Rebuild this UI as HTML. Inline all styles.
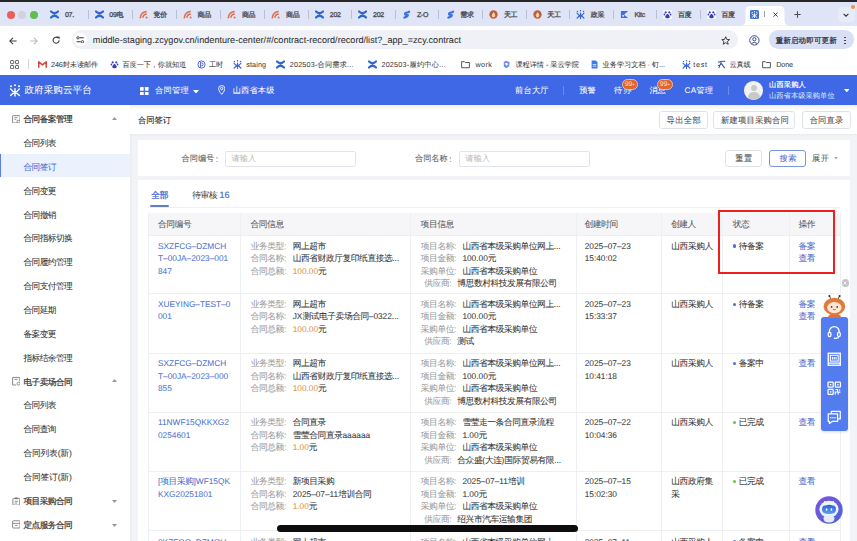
<!DOCTYPE html><html><head><meta charset="utf-8"><style>
*{margin:0;padding:0;box-sizing:border-box}
html,body{width:857px;height:541px;overflow:hidden;background:#f2f3f6;font-family:"Liberation Sans",sans-serif;color:#333;-webkit-text-stroke-width:0.04px;text-rendering:geometricPrecision}
.a{position:absolute;white-space:nowrap}
svg{display:block}
.ti{width:9px;height:9px}
.sep{position:absolute;top:10px;width:1px;height:9px;background:#b9c0d4}
.t{position:absolute;white-space:nowrap}
.lb{color:#9a9a9a}
.vl{position:absolute;width:1px;background:#edeff3}
.hl{position:absolute;height:1px;background:#edeff3}
.btn{position:absolute;border:1px solid #dfe2e8;border-radius:3px;background:#fff}
</style></head><body>
<div class="a" style="left:0;top:0;width:857px;height:25.5px;background:#dfe4f6"></div>
<div class="a" style="left:0;top:0;width:857px;height:1.6px;background:#262626"></div>
<div class="a" style="left:6.6px;top:10.5px;width:8px;height:8px;border-radius:50%;background:#ec5f58"></div>
<div class="a" style="left:18.4px;top:10.5px;width:8px;height:8px;border-radius:50%;background:#d0d3da"></div>
<div class="a" style="left:30.2px;top:10.5px;width:8px;height:8px;border-radius:50%;background:#60bd4e"></div>
<div class="a" style="left:50.3px;top:10px;width:9px;height:9px"><svg class="ti" viewBox="0 0 10 10"><path d="M1.1 1.7Q5 5.4 8.9 1.7M1.1 8.3Q5 4.6 8.9 8.3" stroke="#3065d4" stroke-width="2.5" stroke-linecap="round" fill="none"/></svg></div>
<div id="t0" class="t" style="left:65.0px;top:10.3px;font-size:7px;line-height:12px;color:#4a4d55;-webkit-text-stroke-width:0.3px;letter-spacing:-0.3px">07. </div>
<div class="a" style="left:94.6px;top:10px;width:9px;height:9px"><svg class="ti" viewBox="0 0 10 10"><path d="M1.1 1.7Q5 5.4 8.9 1.7M1.1 8.3Q5 4.6 8.9 8.3" stroke="#3065d4" stroke-width="2.5" stroke-linecap="round" fill="none"/></svg></div>
<div id="t1" class="t" style="left:109.3px;top:10.3px;font-size:7px;line-height:12px;color:#4a4d55;-webkit-text-stroke-width:0.3px;letter-spacing:-0.3px">09电</div>
<div class="a" style="left:138.9px;top:10px;width:9px;height:9px"><svg class="ti" viewBox="0 0 10 10"><path d="M1.6 8.6A7 7 0 0 1 8.6 1.6M4.4 8.6A4.2 4.2 0 0 1 8.6 4.4" stroke="#de6a4c" stroke-width="1.7" fill="none"/><circle cx="8.4" cy="8.4" r="1.1" fill="#de6a4c"/><circle cx="1.5" cy="8.6" r=".9" fill="#de6a4c"/></svg></div>
<div id="t2" class="t" style="left:153.6px;top:10.3px;font-size:7px;line-height:12px;color:#4a4d55;-webkit-text-stroke-width:0.3px;letter-spacing:-0.3px">竞价</div>
<div class="a" style="left:182.9px;top:10px;width:9px;height:9px"><svg class="ti" viewBox="0 0 10 10"><path d="M1.6 8.6A7 7 0 0 1 8.6 1.6M4.4 8.6A4.2 4.2 0 0 1 8.6 4.4" stroke="#de6a4c" stroke-width="1.7" fill="none"/><circle cx="8.4" cy="8.4" r="1.1" fill="#de6a4c"/><circle cx="1.5" cy="8.6" r=".9" fill="#de6a4c"/></svg></div>
<div id="t3" class="t" style="left:197.6px;top:10.3px;font-size:7px;line-height:12px;color:#4a4d55;-webkit-text-stroke-width:0.3px;letter-spacing:-0.3px">商品</div>
<div class="a" style="left:227.2px;top:10px;width:9px;height:9px"><svg class="ti" viewBox="0 0 10 10"><path d="M1.6 8.6A7 7 0 0 1 8.6 1.6M4.4 8.6A4.2 4.2 0 0 1 8.6 4.4" stroke="#de6a4c" stroke-width="1.7" fill="none"/><circle cx="8.4" cy="8.4" r="1.1" fill="#de6a4c"/><circle cx="1.5" cy="8.6" r=".9" fill="#de6a4c"/></svg></div>
<div id="t4" class="t" style="left:241.89999999999998px;top:10.3px;font-size:7px;line-height:12px;color:#4a4d55;-webkit-text-stroke-width:0.3px;letter-spacing:-0.3px">商品</div>
<div class="a" style="left:271.4px;top:10px;width:9px;height:9px"><svg class="ti" viewBox="0 0 10 10"><path d="M1.6 8.6A7 7 0 0 1 8.6 1.6M4.4 8.6A4.2 4.2 0 0 1 8.6 4.4" stroke="#de6a4c" stroke-width="1.7" fill="none"/><circle cx="8.4" cy="8.4" r="1.1" fill="#de6a4c"/><circle cx="1.5" cy="8.6" r=".9" fill="#de6a4c"/></svg></div>
<div id="t5" class="t" style="left:286.09999999999997px;top:10.3px;font-size:7px;line-height:12px;color:#4a4d55;-webkit-text-stroke-width:0.3px;letter-spacing:-0.3px">商品</div>
<div class="a" style="left:315.1px;top:10px;width:9px;height:9px"><svg class="ti" viewBox="0 0 10 10"><path d="M1.1 1.7Q5 5.4 8.9 1.7M1.1 8.3Q5 4.6 8.9 8.3" stroke="#3065d4" stroke-width="2.5" stroke-linecap="round" fill="none"/></svg></div>
<div id="t6" class="t" style="left:329.8px;top:10.3px;font-size:7px;line-height:12px;color:#4a4d55;-webkit-text-stroke-width:0.3px;letter-spacing:-0.3px">202</div>
<div class="a" style="left:358.4px;top:10px;width:9px;height:9px"><svg class="ti" viewBox="0 0 10 10"><path d="M1.1 1.7Q5 5.4 8.9 1.7M1.1 8.3Q5 4.6 8.9 8.3" stroke="#3065d4" stroke-width="2.5" stroke-linecap="round" fill="none"/></svg></div>
<div id="t7" class="t" style="left:373.09999999999997px;top:10.3px;font-size:7px;line-height:12px;color:#4a4d55;-webkit-text-stroke-width:0.3px;letter-spacing:-0.3px">202</div>
<div class="a" style="left:402.2px;top:10px;width:9px;height:9px"><svg class="ti" viewBox="0 0 10 10"><path d="M7.5 2.5C5 2.5 2.5 3.8 3.5 5 4.5 6 7 4.8 6.5 6.3 6 7.5 3.5 8 2.5 8.5" stroke="#3470e0" stroke-width="2.2" stroke-linecap="round" fill="none"/><circle cx="8" cy="1.6" r="1" fill="#3470e0"/></svg></div>
<div id="t8" class="t" style="left:416.9px;top:10.3px;font-size:7px;line-height:12px;color:#4a4d55;-webkit-text-stroke-width:0.3px;letter-spacing:-0.3px">Z-O</div>
<div class="a" style="left:445.5px;top:10px;width:9px;height:9px"><svg class="ti" viewBox="0 0 10 10"><path d="M7.5 2.5C5 2.5 2.5 3.8 3.5 5 4.5 6 7 4.8 6.5 6.3 6 7.5 3.5 8 2.5 8.5" stroke="#3470e0" stroke-width="2.2" stroke-linecap="round" fill="none"/><circle cx="8" cy="1.6" r="1" fill="#3470e0"/></svg></div>
<div id="t9" class="t" style="left:460.2px;top:10.3px;font-size:7px;line-height:12px;color:#4a4d55;-webkit-text-stroke-width:0.3px;letter-spacing:-0.3px">需求</div>
<div class="a" style="left:489.2px;top:10px;width:9px;height:9px"><svg class="ti" viewBox="0 0 10 10"><circle cx="5" cy="5" r="4.6" fill="#b9603f"/><path d="M5 2.2C6.8 4 7 5.3 7 6.2A2 2 0 0 1 3 6.2C3 5 4 4.5 5 2.2Z" fill="#f6d2a5"/></svg></div>
<div id="t10" class="t" style="left:503.9px;top:10.3px;font-size:7px;line-height:12px;color:#4a4d55;-webkit-text-stroke-width:0.3px;letter-spacing:-0.3px">天工</div>
<div class="a" style="left:532.5px;top:10px;width:9px;height:9px"><svg class="ti" viewBox="0 0 10 10"><circle cx="5" cy="5" r="4.6" fill="#b9603f"/><path d="M5 2.2C6.8 4 7 5.3 7 6.2A2 2 0 0 1 3 6.2C3 5 4 4.5 5 2.2Z" fill="#f6d2a5"/></svg></div>
<div id="t11" class="t" style="left:547.2px;top:10.3px;font-size:7px;line-height:12px;color:#4a4d55;-webkit-text-stroke-width:0.3px;letter-spacing:-0.3px">天工</div>
<div class="a" style="left:576.0px;top:10px;width:9px;height:9px"><svg class="ti" viewBox="0 0 10 10"><path d="M5 3.5V9.5M1.2 3.6Q3 6.2 5 6.2Q7 6.2 8.8 3.6M1.2 9Q3 6.6 5 6.6Q7 6.6 8.8 9" stroke="#3a63d4" stroke-width="1.3" fill="none" stroke-linecap="round"/><circle cx="1.6" cy="1.6" r=".8" fill="#3a63d4"/><circle cx="5" cy="0.9" r=".8" fill="#3a63d4"/><circle cx="8.4" cy="1.6" r=".8" fill="#3a63d4"/></svg></div>
<div id="t12" class="t" style="left:590.7px;top:10.3px;font-size:7px;line-height:12px;color:#4a4d55;-webkit-text-stroke-width:0.3px;letter-spacing:-0.3px">政采</div>
<div class="a" style="left:619.8px;top:10px;width:9px;height:9px"><svg class="ti" viewBox="0 0 10 10"><path d="M1 1H9L4.5 5.2 9 9H1Z" fill="#3e6fe0"/><circle cx="3.5" cy="6.5" r="1" fill="#fff"/></svg></div>
<div id="t13" class="t" style="left:634.5px;top:10.3px;font-size:7px;line-height:12px;color:#4a4d55;-webkit-text-stroke-width:0.3px;letter-spacing:-0.3px">Kitc</div>
<div class="a" style="left:663.2px;top:10px;width:9px;height:9px"><svg class="ti" viewBox="0 0 10 10"><rect x="-0.5" y="-0.5" width="11" height="11" rx="2" fill="#fff" opacity=".7"/><ellipse cx="3" cy="2.6" rx="1" ry="1.3" fill="#3a3fb8"/><ellipse cx="7" cy="2.6" rx="1" ry="1.3" fill="#3a3fb8"/><ellipse cx="1.5" cy="5" rx=".9" ry="1.1" fill="#3a3fb8"/><ellipse cx="8.5" cy="5" rx=".9" ry="1.1" fill="#3a3fb8"/><path d="M5 4.3C3.6 5.6 2 6.8 2.6 8.3 3.2 9.5 6.8 9.5 7.4 8.3 8 6.8 6.4 5.6 5 4.3Z" fill="#3a3fb8"/></svg></div>
<div id="t14" class="t" style="left:677.9000000000001px;top:10.3px;font-size:7px;line-height:12px;color:#4a4d55;-webkit-text-stroke-width:0.3px;letter-spacing:-0.3px">百度</div>
<div class="a" style="left:706.7px;top:10px;width:9px;height:9px"><svg class="ti" viewBox="0 0 10 10"><rect x="-0.5" y="-0.5" width="11" height="11" rx="2" fill="#fff" opacity=".7"/><ellipse cx="3" cy="2.6" rx="1" ry="1.3" fill="#3a3fb8"/><ellipse cx="7" cy="2.6" rx="1" ry="1.3" fill="#3a3fb8"/><ellipse cx="1.5" cy="5" rx=".9" ry="1.1" fill="#3a3fb8"/><ellipse cx="8.5" cy="5" rx=".9" ry="1.1" fill="#3a3fb8"/><path d="M5 4.3C3.6 5.6 2 6.8 2.6 8.3 3.2 9.5 6.8 9.5 7.4 8.3 8 6.8 6.4 5.6 5 4.3Z" fill="#3a3fb8"/></svg></div>
<div id="t15" class="t" style="left:721.4000000000001px;top:10.3px;font-size:7px;line-height:12px;color:#4a4d55;-webkit-text-stroke-width:0.3px;letter-spacing:-0.3px">百度</div>
<div class="sep" style="left:88.2px"></div>
<div class="sep" style="left:131.9px"></div>
<div class="sep" style="left:175.9px"></div>
<div class="sep" style="left:220.2px"></div>
<div class="sep" style="left:264.4px"></div>
<div class="sep" style="left:308.3px"></div>
<div class="sep" style="left:351.4px"></div>
<div class="sep" style="left:395.1px"></div>
<div class="sep" style="left:438.3px"></div>
<div class="sep" style="left:482.3px"></div>
<div class="sep" style="left:525.6px"></div>
<div class="sep" style="left:568.9px"></div>
<div class="sep" style="left:612.8px"></div>
<div class="sep" style="left:656.3px"></div>
<div class="sep" style="left:699.7px"></div>
<svg class="a" style="left:740px;top:6.2px" width="50" height="19.5" viewBox="0 0 50 19.5"><path d="M0 19.5Q5.5 19.5 5.5 14.5V5Q5.5 0 10.5 0H39.5Q44.5 0 44.5 5V14.5Q44.5 19.5 50 19.5Z" fill="#fff"/></svg>
<div class="a" style="left:750px;top:9.6px;width:9.4px;height:9.4px;border-radius:1.5px;background:#3d73d9"></div>
<svg class="a" style="left:751.2px;top:10.6px" width="7" height="7.4" viewBox="0 0 12 13"><path d="M6 4.6V12M1.6 4.9Q4 8.2 6 8.2Q8 8.2 10.4 4.9M1.6 11.5Q4 8.6 6 8.6Q8 8.6 10.4 11.5" stroke="#fff" stroke-width="1.6" fill="none" stroke-linecap="round"/><circle cx="2" cy="2.3" r="1.1" fill="#fff"/><circle cx="6" cy="1.2" r="1.1" fill="#fff"/><circle cx="10" cy="2.3" r="1.1" fill="#fff"/></svg>
<div class="a" style="left:764.3px;top:11px;width:1px;height:6px;background:#9aa0aa"></div>
<svg class="a" style="left:772.6px;top:12.2px" width="5.2" height="5.2" viewBox="0 0 10 10"><path d="M1 1 9 9M9 1 1 9" stroke="#333" stroke-width="1.8"/></svg>
<svg class="a" style="left:793.5px;top:10.8px" width="7" height="7" viewBox="0 0 10 10"><path d="M5 0.5V9.5M0.5 5H9.5" stroke="#4a4d55" stroke-width="1.5"/></svg>
<div class="a" style="left:837.5px;top:6.7px;width:17px;height:15.5px;border-radius:4px;background:#e8ecf8"></div>
<svg class="a" style="left:843px;top:12.8px" width="6" height="4" viewBox="0 0 10 6"><path d="M1 1 5 5 9 1" stroke="#333" stroke-width="1.8" fill="none"/></svg>
<div class="a" style="left:850.6px;top:4.6px;width:4.4px;height:4.4px;border-radius:50%;background:#e29a4d"></div>
<div class="a" style="left:0;top:25.5px;width:857px;height:49.5px;background:#fff"></div>
<svg class="a" style="left:8.5px;top:36.5px" width="8" height="8" viewBox="0 0 10 10"><path d="M9.5 5H1M5 1 1 5 5 9" stroke="#3c3c3c" stroke-width="1.3" fill="none"/></svg>
<svg class="a" style="left:29.5px;top:36.5px" width="8" height="8" viewBox="0 0 10 10"><path d="M0.5 5H9M5 1 9 5 5 9" stroke="#b9b9b9" stroke-width="1.3" fill="none"/></svg>
<svg class="a" style="left:51.5px;top:36.3px" width="8.4" height="8.4" viewBox="0 0 10 10"><path d="M8.5 5.2A3.6 3.6 0 1 1 7.3 2.3" stroke="#3c3c3c" stroke-width="1.3" fill="none"/><path d="M5.8 0.6 9.2 0.8 8.8 4.2Z" fill="#3c3c3c"/></svg>
<div class="a" style="left:71.5px;top:30.3px;width:666.5px;height:18.6px;border-radius:9.3px;background:#eff1f6"></div>
<div class="a" style="left:74.2px;top:33.3px;width:12.6px;height:12.6px;border-radius:50%;background:#fff"></div>
<svg class="a" style="left:76.3px;top:35.6px" width="8.4" height="7.6" viewBox="-0.3 -0.3 10.6 9.6"><path d="M4.3 2H9.5M0.5 7H5.7" stroke="#333" stroke-width="1.3"/><circle cx="2.2" cy="2" r="1.5" fill="none" stroke="#333" stroke-width="1.1"/><circle cx="7.8" cy="7" r="1.5" fill="none" stroke="#333" stroke-width="1.1"/></svg>
<div id="t16" class="t" style="left:92.8px;top:34px;font-size:9.1px;line-height:13px;color:#2d2d2d;letter-spacing:0.015px;">middle-staging.zcygov.cn/indenture-center/#/contract-record/record/list?_app_=zcy.contract</div>
<svg class="a" style="left:720.8px;top:35.8px" width="9.4" height="9.2" viewBox="0 0 10 10"><path d="M5 0.8 6.2 3.7 9.3 3.9 6.9 5.9 7.7 9 5 7.3 2.3 9 3.1 5.9 0.7 3.9 3.8 3.7Z" stroke="#333" stroke-width="1" fill="none" stroke-linejoin="round"/></svg>
<svg class="a" style="left:749.2px;top:35.2px" width="10.8" height="10.8" viewBox="0 0 12 12"><circle cx="6" cy="6" r="5.2" stroke="#3b4a86" stroke-width="1.1" fill="none"/><circle cx="6" cy="4.7" r="1.8" stroke="#3b4a86" stroke-width="1.1" fill="none"/><path d="M2.8 9.5Q6 6.6 9.2 9.5" stroke="#3b4a86" stroke-width="1.1" fill="none"/></svg>
<div class="a" style="left:768.6px;top:30.3px;width:85.4px;height:18.6px;border-radius:9.3px;background:#d9e0f6"></div>
<div id="t17" class="t" style="left:775.7px;top:34.3px;font-size:7.5px;line-height:13px;color:#25283a;letter-spacing:0.143px;-webkit-text-stroke-width:0.2px">重新启动即可更新</div>
<div class="a" style="left:844.3px;top:36.6px;width:1.6px;height:1.6px;border-radius:50%;background:#25283a"></div>
<div class="a" style="left:844.3px;top:39.6px;width:1.6px;height:1.6px;border-radius:50%;background:#25283a"></div>
<div class="a" style="left:844.3px;top:42.6px;width:1.6px;height:1.6px;border-radius:50%;background:#25283a"></div>
<svg class="a" style="left:10px;top:59.5px" width="9.2" height="9.2" viewBox="0 0 10 10"><rect x="0.6" y="0.6" width="3.4" height="3.4" rx=".6" stroke="#555" stroke-width="1" fill="none"/><rect x="6" y="0.6" width="3.4" height="3.4" rx=".6" stroke="#555" stroke-width="1" fill="none"/><rect x="0.6" y="6" width="3.4" height="3.4" rx=".6" stroke="#555" stroke-width="1" fill="none"/><rect x="6" y="6" width="3.4" height="3.4" rx=".6" stroke="#555" stroke-width="1" fill="none"/></svg>
<div class="a" style="left:28.2px;top:59px;width:1px;height:10px;background:#d5d5d5"></div>
<div class="a" style="left:37.6px;top:59.8px;width:9px;height:9px"><svg class="ti" viewBox="0 0 10 10"><path d="M0.8 8.5V2L5 5.5 9.2 2V8.5" stroke="#d8473b" stroke-width="1.8" fill="none" stroke-linejoin="round"/></svg></div>
<div id="t18" class="t" style="left:51px;top:58.2px;font-size:7.2px;line-height:13px;color:#3a3a3a;letter-spacing:-0.091px;">246封未读邮件</div>
<div class="a" style="left:109.8px;top:59.8px;width:9px;height:9px"><svg class="ti" viewBox="0 0 10 10"><rect x="-0.5" y="-0.5" width="11" height="11" rx="2" fill="#fff" opacity="0"/><ellipse cx="3" cy="2.6" rx="1" ry="1.3" fill="#3a3fb8"/><ellipse cx="7" cy="2.6" rx="1" ry="1.3" fill="#3a3fb8"/><ellipse cx="1.5" cy="5" rx=".9" ry="1.1" fill="#3a3fb8"/><ellipse cx="8.5" cy="5" rx=".9" ry="1.1" fill="#3a3fb8"/><path d="M5 4.3C3.6 5.6 2 6.8 2.6 8.3 3.2 9.5 6.8 9.5 7.4 8.3 8 6.8 6.4 5.6 5 4.3Z" fill="#3a3fb8"/></svg></div>
<div id="t19" class="t" style="left:122.5px;top:58.2px;font-size:7.2px;line-height:13px;color:#3a3a3a;letter-spacing:-0.123px;">百度一下，你就知道</div>
<div class="a" style="left:196.5px;top:59.8px;width:9px;height:9px"><svg class="ti" viewBox="0 0 10 10"><circle cx="5" cy="5" r="4" stroke="#3b5ac8" stroke-width="1" fill="none"/><path d="M3.8 2.5V8.5M3.8 3.2H5.2A1.6 1.6 0 0 1 5.2 6.4H3.8" stroke="#3b5ac8" stroke-width="1" fill="none"/></svg></div>
<div id="t20" class="t" style="left:208.9px;top:58.2px;font-size:7.2px;line-height:13px;color:#3a3a3a;letter-spacing:0.025px;">工时</div>
<div class="a" style="left:233px;top:59.8px;width:9px;height:9px"><svg class="ti" viewBox="0 0 10 10"><path d="M5 3.5V9.5M1.2 3.6Q3 6.2 5 6.2Q7 6.2 8.8 3.6M1.2 9Q3 6.6 5 6.6Q7 6.6 8.8 9" stroke="#3a63d4" stroke-width="1.3" fill="none" stroke-linecap="round"/><circle cx="1.6" cy="1.6" r=".8" fill="#3a63d4"/><circle cx="5" cy="0.9" r=".8" fill="#3a63d4"/><circle cx="8.4" cy="1.6" r=".8" fill="#3a63d4"/></svg></div>
<div id="t21" class="t" style="left:246.3px;top:58.2px;font-size:7.2px;line-height:13px;color:#3a3a3a;letter-spacing:0.102px;">staing</div>
<div class="a" style="left:275.6px;top:59.8px;width:9px;height:9px"><svg class="ti" viewBox="0 0 10 10"><path d="M1.1 1.7Q5 5.4 8.9 1.7M1.1 8.3Q5 4.6 8.9 8.3" stroke="#3065d4" stroke-width="2.5" stroke-linecap="round" fill="none"/></svg></div>
<div id="t22" class="t" style="left:289.8px;top:58.2px;font-size:7.2px;line-height:13px;color:#3a3a3a;letter-spacing:0.190px;">202503-合同需求...</div>
<div class="a" style="left:368px;top:59.8px;width:9px;height:9px"><svg class="ti" viewBox="0 0 10 10"><path d="M1.1 1.7Q5 5.4 8.9 1.7M1.1 8.3Q5 4.6 8.9 8.3" stroke="#3065d4" stroke-width="2.5" stroke-linecap="round" fill="none"/></svg></div>
<div id="t23" class="t" style="left:381.4px;top:58.2px;font-size:7.2px;line-height:13px;color:#3a3a3a;letter-spacing:0.244px;">202503-履约中心...</div>
<div class="a" style="left:460.8px;top:59.8px;width:9px;height:9px"><svg class="ti" viewBox="0 0 10 10"><path d="M0.7 1.8H3.8L4.8 2.8H9.3V8.6H0.7Z" stroke="#444" stroke-width="1" fill="none" stroke-linejoin="round"/></svg></div>
<div id="t24" class="t" style="left:475.5px;top:58.2px;font-size:7.2px;line-height:13px;color:#3a3a3a;letter-spacing:0.404px;">work</div>
<div class="a" style="left:502px;top:59.8px;width:9px;height:9px"><svg class="ti" viewBox="0 0 10 10"><path d="M2 2 5 0.8 8.5 2.5 8 7 5 9.2 2 7.5Z" fill="#6f90e6"/><path d="M3 4 5 3 7 4.5 5 6.5Z" fill="#fff"/></svg></div>
<div id="t25" class="t" style="left:515.4px;top:58.2px;font-size:7.2px;line-height:13px;color:#3a3a3a;letter-spacing:-0.039px;">课程详情 - 采云学院</div>
<div class="a" style="left:589.5px;top:59.8px;width:9px;height:9px"><svg class="ti" viewBox="0 0 10 10"><path d="M1.8 0.6H6.4L8.4 2.6V9.4H1.8Z" fill="#3d7bea"/><path d="M3 5H7M3 6.8H7" stroke="#fff" stroke-width=".8"/></svg></div>
<div id="t26" class="t" style="left:602.6px;top:58.2px;font-size:7.2px;line-height:13px;color:#3a3a3a;letter-spacing:-0.025px;">业务学习文档 · 钉...</div>
<div class="a" style="left:682px;top:59.8px;width:9px;height:9px"><svg class="ti" viewBox="0 0 10 10"><path d="M5 3.5V9.5M1.2 3.6Q3 6.2 5 6.2Q7 6.2 8.8 3.6M1.2 9Q3 6.6 5 6.6Q7 6.6 8.8 9" stroke="#3a63d4" stroke-width="1.3" fill="none" stroke-linecap="round"/><circle cx="1.6" cy="1.6" r=".8" fill="#3a63d4"/><circle cx="5" cy="0.9" r=".8" fill="#3a63d4"/><circle cx="8.4" cy="1.6" r=".8" fill="#3a63d4"/></svg></div>
<div id="t27" class="t" style="left:693.3px;top:58.2px;font-size:7.2px;line-height:13px;color:#3a3a3a;letter-spacing:0.702px;">test</div>
<div class="a" style="left:717px;top:59.8px;width:9px;height:9px"><svg class="ti" viewBox="0 0 10 10"><path d="M1 2.5Q5 1 9 1.5M5 1.5 2 9M5 4 8.5 9M5 4Q3 6 1 6.5" stroke="#3756b8" stroke-width="1.2" fill="none"/></svg></div>
<div id="t28" class="t" style="left:729.4px;top:58.2px;font-size:7.2px;line-height:13px;color:#3a3a3a;letter-spacing:-0.081px;">云真线</div>
<div class="a" style="left:761.6px;top:59.8px;width:9px;height:9px"><svg class="ti" viewBox="0 0 10 10"><path d="M0.7 1.8H3.8L4.8 2.8H9.3V8.6H0.7Z" stroke="#444" stroke-width="1" fill="none" stroke-linejoin="round"/></svg></div>
<div id="t29" class="t" style="left:776.3px;top:58.2px;font-size:7.2px;line-height:13px;color:#3a3a3a;letter-spacing:-0.129px;">Done</div>
<div class="a" style="left:0;top:74.8px;width:857px;height:30.5px;background:#3e68e5"></div>
<svg class="a" style="left:8.5px;top:84px" width="12" height="13" viewBox="0 0 12 13"><path d="M6 4.6V12M1.6 4.9Q4 8.2 6 8.2Q8 8.2 10.4 4.9M1.6 11.5Q4 8.6 6 8.6Q8 8.6 10.4 11.5" stroke="#fff" stroke-width="1.4" fill="none" stroke-linecap="round"/><circle cx="2" cy="2.3" r="1" fill="#fff"/><circle cx="6" cy="1.2" r="1" fill="#fff"/><circle cx="10" cy="2.3" r="1" fill="#fff"/></svg>
<div id="t30" class="t" style="left:24.5px;top:84.5px;font-size:9.5px;line-height:12px;color:#fff;letter-spacing:0.117px;">政府采购云平台</div>
<svg class="a" style="left:140px;top:86.5px" width="8.6" height="8.6" viewBox="0 0 10 10"><rect x="0" y="0" width="4.3" height="4.3" rx=".5" fill="#fff"/><rect x="5.7" y="0" width="4.3" height="4.3" rx=".5" fill="#fff"/><rect x="0" y="5.7" width="4.3" height="4.3" rx=".5" fill="#fff"/><rect x="5.7" y="5.7" width="4.3" height="4.3" rx=".5" fill="#fff"/></svg>
<div id="t31" class="t" style="left:155px;top:85px;font-size:8.2px;line-height:12px;color:#fff;letter-spacing:0.317px;">合同管理</div>
<svg class="a" style="left:193px;top:89.5px" width="6" height="3.6" viewBox="0 0 10 6"><path d="M0 0H10L5 6Z" fill="#fff"/></svg>
<svg class="a" style="left:217.5px;top:85.2px" width="7.4" height="10" viewBox="0 0 8 11"><path d="M4 10.3C1.5 7.3 0.6 5.6 0.6 4A3.4 3.4 0 0 1 7.4 4C7.4 5.6 6.5 7.3 4 10.3Z" stroke="#fff" stroke-width="1" fill="none"/><circle cx="4" cy="4" r="1.3" stroke="#fff" stroke-width="1" fill="none"/></svg>
<div id="t32" class="t" style="left:232.7px;top:85px;font-size:8.2px;line-height:12px;color:#fff;letter-spacing:0.191px;">山西省本级</div>
<div id="t33" class="t" style="left:515px;top:84.5px;font-size:8.2px;line-height:12px;color:#fff;letter-spacing:0.250px;">前台大厅</div>
<div class="a" style="left:563.3px;top:86px;width:1px;height:9px;background:#6f8be8"></div>
<div id="t34" class="t" style="left:579.3px;top:84.5px;font-size:8.2px;line-height:12px;color:#fff;letter-spacing:0.025px;">预警</div>
<div id="t35" class="t" style="left:614px;top:84.5px;font-size:8.2px;line-height:12px;color:#fff;letter-spacing:1.025px;">待办</div>
<div id="t36" class="t" style="left:649.4px;top:84.5px;font-size:8.2px;line-height:12px;color:#fff;letter-spacing:-0.075px;">消息</div>
<div id="t37" class="t" style="left:684.5px;top:84.5px;font-size:8.2px;line-height:12px;color:#fff;letter-spacing:0.250px;">CA管理</div>
<div class="a" style="left:728px;top:86px;width:1px;height:9px;background:#6f8be8"></div>
<div class="a" style="left:621.5px;top:79.3px;width:16.6px;height:10.5px;border-radius:5.25px;background:#e0652f;border:0.9px solid #f0b9a0;color:#fbe0d0;font-size:6.8px;line-height:9.8px;text-align:center;-webkit-text-stroke-width:0">99<span style="font-size:4.5px">+</span></div>
<div class="a" style="left:656.5px;top:79.3px;width:16.6px;height:10.5px;border-radius:5.25px;background:#e0652f;border:0.9px solid #f0b9a0;color:#fbe0d0;font-size:6.8px;line-height:9.8px;text-align:center;-webkit-text-stroke-width:0">99<span style="font-size:4.5px">+</span></div>
<div class="a" style="left:744.4px;top:81.3px;width:18.6px;height:18.6px;border-radius:50%;background:#f2f2f2;overflow:hidden"><div style="position:absolute;left:6.3px;top:3.8px;width:6px;height:6px;border-radius:50%;background:#c9c9c9"></div><div style="position:absolute;left:3.3px;top:11px;width:12px;height:10px;border-radius:50%;background:#c9c9c9"></div></div>
<div id="t38" class="t" style="left:769px;top:79.4px;font-size:7.2px;line-height:12px;color:#fff;letter-spacing:0.191px;-webkit-text-stroke-width:0.2px">山西采购人</div>
<div id="t39" class="t" style="left:769px;top:89.8px;font-size:7.2px;line-height:12px;color:#dbe3fb;letter-spacing:0.114px;">山西省本级采购单位</div>
<svg class="a" style="left:843.8px;top:89px" width="5.6" height="3.4" viewBox="0 0 10 6"><path d="M0 0H10L5 6Z" fill="#fff"/></svg>
<div class="a" style="left:0;top:105px;width:130px;height:436px;background:#fff;box-shadow:1px 0 2px rgba(0,0,0,.04)"></div>
<div class="a" style="left:0;top:153.5px;width:130px;height:23.5px;background:#ebf1fd"></div>
<div class="a" style="left:0;top:153.5px;width:1.3px;height:23.5px;background:#5b7fdc"></div>
<div id="t40" class="t" style="left:23.5px;top:113.2px;font-size:8.7px;line-height:12px;color:#333;letter-spacing:-0.565px;-webkit-text-stroke-width:0.2px">合同备案管理</div>
<svg class="a" style="left:11.8px;top:114.90px" width="8.6" height="8.6" viewBox="0 0 10 10"><rect x="0.7" y="0.7" width="8.6" height="8.6" rx=".8" stroke="#777" stroke-width="1" fill="none"/><path d="M2.8 3H6.5M2.8 5H5" stroke="#777" stroke-width=".9"/><path d="M6 9.3V6.2H9.3" stroke="#777" stroke-width=".9" fill="none"/></svg>
<svg class="a" style="left:112px;top:116.90px" width="5" height="3" viewBox="0 0 10 6"><path d="M0 6H10L5 0Z" fill="#999"/></svg>
<div id="t41" class="t" style="left:23.5px;top:137.05px;font-size:8.7px;line-height:12px;color:#333;letter-spacing:-0.617px;">合同列表</div>
<div id="t42" class="t" style="left:23.5px;top:160.9px;font-size:8.7px;line-height:12px;color:#4b6fd6;letter-spacing:-0.617px;">合同签订</div>
<div id="t43" class="t" style="left:23.5px;top:184.75px;font-size:8.7px;line-height:12px;color:#333;letter-spacing:-0.617px;">合同变更</div>
<div id="t44" class="t" style="left:23.5px;top:208.6px;font-size:8.7px;line-height:12px;color:#333;letter-spacing:-0.617px;">合同撤销</div>
<div id="t45" class="t" style="left:23.5px;top:232.45px;font-size:8.7px;line-height:12px;color:#333;letter-spacing:-0.565px;">合同指标切换</div>
<div id="t46" class="t" style="left:23.5px;top:256.3px;font-size:8.7px;line-height:12px;color:#333;letter-spacing:-0.565px;">合同履约管理</div>
<div id="t47" class="t" style="left:23.5px;top:280.15px;font-size:8.7px;line-height:12px;color:#333;letter-spacing:-0.565px;">合同支付管理</div>
<div id="t48" class="t" style="left:23.5px;top:304.0px;font-size:8.7px;line-height:12px;color:#333;letter-spacing:-0.617px;">合同延期</div>
<div id="t49" class="t" style="left:23.5px;top:327.85px;font-size:8.7px;line-height:12px;color:#333;letter-spacing:-0.617px;">备案变更</div>
<div id="t50" class="t" style="left:23.5px;top:351.7px;font-size:8.7px;line-height:12px;color:#333;letter-spacing:-0.565px;">指标结余管理</div>
<div id="t51" class="t" style="left:23.5px;top:375.55px;font-size:8.7px;line-height:12px;color:#333;letter-spacing:-0.565px;-webkit-text-stroke-width:0.2px">电子卖场合同</div>
<svg class="a" style="left:11.8px;top:377.25px" width="8.6" height="8.6" viewBox="0 0 10 10"><path d="M9 5V0.7H0.7V9.3H5" stroke="#777" stroke-width="1" fill="none"/><path d="M2.8 3H6.5" stroke="#777" stroke-width=".9"/><circle cx="7.6" cy="7.6" r="1.7" stroke="#777" stroke-width=".9" fill="none"/></svg>
<svg class="a" style="left:112px;top:379.25px" width="5" height="3" viewBox="0 0 10 6"><path d="M0 6H10L5 0Z" fill="#999"/></svg>
<div id="t52" class="t" style="left:23.5px;top:399.4px;font-size:8.7px;line-height:12px;color:#333;letter-spacing:-0.617px;">合同列表</div>
<div id="t53" class="t" style="left:23.5px;top:423.25px;font-size:8.7px;line-height:12px;color:#333;letter-spacing:-0.617px;">合同查询</div>
<div id="t54" class="t" style="left:23.5px;top:447.1px;font-size:8.7px;line-height:12px;color:#333;letter-spacing:-0.156px;">合同列表(新)</div>
<div id="t55" class="t" style="left:23.5px;top:470.95px;font-size:8.7px;line-height:12px;color:#333;letter-spacing:-0.156px;">合同签订(新)</div>
<div id="t56" class="t" style="left:23.5px;top:494.8px;font-size:8.7px;line-height:12px;color:#333;letter-spacing:-0.565px;-webkit-text-stroke-width:0.2px">项目采购合同</div>
<svg class="a" style="left:11.8px;top:496.50px" width="8.6" height="8.6" viewBox="0 0 10 10"><rect x="1" y="1.6" width="8" height="7.8" rx=".8" stroke="#777" stroke-width="1" fill="none"/><rect x="3.3" y="0.5" width="3.4" height="2" rx=".5" fill="#777"/><path d="M3 5H7M3 7H6" stroke="#777" stroke-width=".9"/></svg>
<svg class="a" style="left:112px;top:500.00px" width="5" height="3" viewBox="0 0 10 6"><path d="M0 0H10L5 6Z" fill="#999"/></svg>
<div id="t57" class="t" style="left:23.5px;top:518.65px;font-size:8.7px;line-height:12px;color:#333;letter-spacing:-0.565px;-webkit-text-stroke-width:0.2px">定点服务合同</div>
<svg class="a" style="left:11.8px;top:520.35px" width="8.6" height="8.6" viewBox="0 0 10 10"><rect x="0.7" y="0.9" width="8.6" height="8.4" rx=".8" stroke="#777" stroke-width="1" fill="none"/><path d="M0.7 4H9.3M3.5 6.3H6.5" stroke="#777" stroke-width=".9"/></svg>
<svg class="a" style="left:112px;top:523.85px" width="5" height="3" viewBox="0 0 10 6"><path d="M0 0H10L5 6Z" fill="#999"/></svg>
<div class="a" style="left:130px;top:105px;width:727px;height:29px;background:#fff;box-shadow:0 1px 3px rgba(0,0,0,.04)"></div>
<div id="t58" class="t" style="left:138px;top:114px;font-size:8.3px;line-height:12px;color:#2a2a2a;letter-spacing:-0.062px;-webkit-text-stroke-width:0.12px">合同签订</div>
<div class="btn" style="left:659px;top:111.3px;width:48.6px;height:17.7px"></div>
<div id="t59" class="t" style="left:666.6px;top:114.2px;font-size:8.3px;line-height:12px;color:#444;letter-spacing:0.304px;">导出全部</div>
<div class="btn" style="left:713.4px;top:111.3px;width:81.6px;height:17.7px"></div>
<div id="t60" class="t" style="left:721px;top:114.2px;font-size:8.3px;line-height:12px;color:#444;letter-spacing:0.189px;">新建项目采购合同</div>
<div class="btn" style="left:801.6px;top:111.3px;width:49.1px;height:17.7px"></div>
<div id="t61" class="t" style="left:809.7px;top:114.2px;font-size:8.3px;line-height:12px;color:#444;letter-spacing:0.137px;">合同直录</div>
<div class="a" style="left:130px;top:105.3px;width:727px;height:6px;background:linear-gradient(rgba(40,50,90,.07),rgba(40,50,90,0))"></div>
<div class="a" style="left:137.5px;top:140.3px;width:712.5px;height:35.5px;background:#fff"></div>
<div id="t62" class="t" style="left:181.6px;top:152.8px;font-size:8.2px;line-height:12px;color:#555;letter-spacing:-0.017px;">合同编号</div>
<div id="t63" class="t" style="left:215.8px;top:152.8px;font-size:8.3px;line-height:12px;color:#555;">:</div>
<div class="a" style="left:225.3px;top:150.8px;width:130.7px;height:16.7px;border:1px solid #e1e4ea;border-radius:2px;background:#fff"></div>
<div id="t64" class="t" style="left:231.5px;top:152.8px;font-size:8.2px;line-height:12px;color:#bbb;letter-spacing:0.069px;">请输入</div>
<div id="t65" class="t" style="left:415px;top:152.8px;font-size:8.2px;line-height:12px;color:#555;letter-spacing:-0.017px;">合同名称</div>
<div id="t66" class="t" style="left:449.2px;top:152.8px;font-size:8.3px;line-height:12px;color:#555;">:</div>
<div class="a" style="left:459px;top:150.8px;width:131px;height:16.7px;border:1px solid #e1e4ea;border-radius:2px;background:#fff"></div>
<div id="t67" class="t" style="left:465.2px;top:152.8px;font-size:8.2px;line-height:12px;color:#bbb;letter-spacing:0.069px;">请输入</div>
<div class="btn" style="left:724.6px;top:149.7px;width:37.8px;height:17.6px"></div>
<div id="t68" class="t" style="left:735.2px;top:152.8px;font-size:8.2px;line-height:12px;color:#444;letter-spacing:0.625px;">重置</div>
<div class="btn" style="left:769px;top:149.7px;width:37.4px;height:17.6px;border-color:#7c95dc"></div>
<div id="t69" class="t" style="left:779.4px;top:152.8px;font-size:8.2px;line-height:12px;color:#4b6fd0;letter-spacing:0.625px;">搜索</div>
<div id="t70" class="t" style="left:812px;top:152.8px;font-size:8.2px;line-height:12px;color:#555;letter-spacing:0.625px;">展开</div>
<svg class="a" style="left:833.5px;top:157.3px" width="4" height="2.6" viewBox="0 0 10 6"><path d="M0 0H10L5 6Z" fill="#aaa"/></svg>
<div class="a" style="left:137.5px;top:179.7px;width:712.5px;height:362px;background:#fff"></div>
<div id="t71" class="t" style="left:151.3px;top:189px;font-size:8.7px;line-height:12px;color:#4b6fd0;letter-spacing:-0.275px;-webkit-text-stroke-width:0.3px">全部</div>
<div class="a" style="left:150px;top:205px;width:19px;height:2px;border-radius:1px;background:#5f7dcc"></div>
<div class="hl" style="left:148px;top:207px;width:692px"></div>
<div class="t" style="left:192.2px;top:189px;font-size:8.3px;line-height:12px;color:#444"><span style="font-size:8.75px;letter-spacing:-0.45px">待审核</span> <span style="color:#4b6fd0;font-size:9px;-webkit-text-stroke-width:0.2px">16</span></div>
<div class="a" style="left:148px;top:213px;width:692px;height:22px;background:#f6f6f8"></div>
<div class="vl" style="left:148px;top:213px;height:328px"></div>
<div class="vl" style="left:240px;top:213px;height:328px"></div>
<div class="vl" style="left:410px;top:213px;height:328px"></div>
<div class="vl" style="left:575.5px;top:213px;height:328px"></div>
<div class="vl" style="left:661px;top:213px;height:328px"></div>
<div class="vl" style="left:722px;top:213px;height:328px"></div>
<div class="vl" style="left:788.6px;top:213px;height:328px"></div>
<div class="vl" style="left:840px;top:213px;height:328px"></div>
<div class="t" style="left:158px;top:218.00px;font-size:8.3px;line-height:12px;color:#555;"><span style="font-size:8.75px;letter-spacing:-0.45px">合同编号</span></div>
<div class="t" style="left:250.5px;top:218.00px;font-size:8.3px;line-height:12px;color:#555;"><span style="font-size:8.75px;letter-spacing:-0.45px">合同信息</span></div>
<div class="t" style="left:420.6px;top:218.00px;font-size:8.3px;line-height:12px;color:#555;"><span style="font-size:8.75px;letter-spacing:-0.45px">项目信息</span></div>
<div class="t" style="left:584.5px;top:218.00px;font-size:8.3px;line-height:12px;color:#555;"><span style="font-size:8.75px;letter-spacing:-0.45px">创建时间</span></div>
<div class="t" style="left:671px;top:218.00px;font-size:8.3px;line-height:12px;color:#555;"><span style="font-size:8.75px;letter-spacing:-0.45px">创建人</span></div>
<div class="t" style="left:732.8px;top:218.00px;font-size:8.3px;line-height:12px;color:#555;"><span style="font-size:8.75px;letter-spacing:-0.45px">状态</span></div>
<div class="t" style="left:798.4px;top:218.00px;font-size:8.3px;line-height:12px;color:#555;"><span style="font-size:8.75px;letter-spacing:-0.45px">操作</span></div>
<div class="hl" style="left:148px;top:235px;width:692px"></div>
<div class="hl" style="left:148px;top:293.2px;width:692px"></div>
<div class="hl" style="left:148px;top:352.6px;width:692px"></div>
<div class="hl" style="left:148px;top:411.6px;width:692px"></div>
<div class="hl" style="left:148px;top:470.6px;width:692px"></div>
<div class="hl" style="left:148px;top:529.5px;width:692px"></div>
<div class="t" style="left:158px;top:239.80px;font-size:8.3px;line-height:12px;color:#4b6fd0;">SXZFCG–DZMCH</div>
<div class="t" style="left:158px;top:252.20px;font-size:8.3px;line-height:12px;color:#4b6fd0;">T–00JA–2023–001</div>
<div class="t" style="left:158px;top:264.60px;font-size:8.3px;line-height:12px;color:#4b6fd0;">847</div>
<div class="t" style="left:250.7px;top:239.80px;font-size:8.3px;line-height:12px;color:#9a9a9a;"><span style="font-size:8.75px;letter-spacing:-0.45px">业务类型</span>:</div>
<div class="t" style="left:292.7px;top:239.80px;font-size:8.3px;line-height:12px;color:#333;"><span style="font-size:8.75px;letter-spacing:-0.45px">网上超市</span></div>
<div class="t" style="left:250.7px;top:252.20px;font-size:8.3px;line-height:12px;color:#9a9a9a;"><span style="font-size:8.75px;letter-spacing:-0.45px">合同名称</span>:</div>
<div class="t" style="left:292.7px;top:252.20px;font-size:8.3px;line-height:12px;color:#333;"><span style="font-size:8.75px;letter-spacing:-0.45px">山西省财政厅复印纸直接选</span>...</div>
<div class="t" style="left:250.7px;top:264.60px;font-size:8.3px;line-height:12px;color:#9a9a9a;"><span style="font-size:8.75px;letter-spacing:-0.45px">合同总额</span>:</div>
<div class="t" style="left:292.7px;top:264.60px;font-size:8.3px;line-height:12px;color:#333;"><span style="color:#dc9042">100.00</span><span style="font-size:8.75px;letter-spacing:-0.45px">元</span></div>
<div class="t" style="left:420.8px;top:239.80px;font-size:8.3px;line-height:12px;color:#9a9a9a;"><span style="font-size:8.75px;letter-spacing:-0.45px">项目名称</span>:</div>
<div class="t" style="left:462.4px;top:239.80px;font-size:8.3px;line-height:12px;color:#333;"><span style="font-size:8.75px;letter-spacing:-0.45px">山西省本级采购单位网上</span>...</div>
<div class="t" style="left:420.8px;top:252.20px;font-size:8.3px;line-height:12px;color:#9a9a9a;"><span style="font-size:8.75px;letter-spacing:-0.45px">项目金额</span>:</div>
<div class="t" style="left:462.4px;top:252.20px;font-size:8.3px;line-height:12px;color:#333;">100.00<span style="font-size:8.75px;letter-spacing:-0.45px">元</span></div>
<div class="t" style="left:420.8px;top:264.60px;font-size:8.3px;line-height:12px;color:#9a9a9a;"><span style="font-size:8.75px;letter-spacing:-0.45px">采购单位</span>:</div>
<div class="t" style="left:462.4px;top:264.60px;font-size:8.3px;line-height:12px;color:#333;"><span style="font-size:8.75px;letter-spacing:-0.45px">山西省本级采购单位</span></div>
<div class="t" style="left:424.3px;top:277.00px;font-size:8.3px;line-height:12px;color:#9a9a9a;"><span style="font-size:8.75px;letter-spacing:-0.45px">供应商</span>:</div>
<div class="t" style="left:457.3px;top:277.00px;font-size:8.3px;line-height:12px;color:#333;"><span style="font-size:8.75px;letter-spacing:-0.45px">博思数村科技发展有限公司</span></div>
<div class="t" style="left:584.7px;top:239.80px;font-size:8.3px;line-height:12px;color:#333;">2025–07–23</div>
<div class="t" style="left:584.7px;top:252.20px;font-size:8.3px;line-height:12px;color:#333;">15:40:02</div>
<div class="t" style="left:671.3px;top:239.80px;font-size:8.3px;line-height:12px;color:#333;"><span style="font-size:8.75px;letter-spacing:-0.45px">山西采购人</span></div>
<div class="a" style="left:732.6px;top:244.4px;width:3.4px;height:3.4px;border-radius:50%;background:#4b6fd0"></div>
<div class="t" style="left:738.7px;top:239.80px;font-size:8.3px;line-height:12px;color:#333;"><span style="font-size:8.75px;letter-spacing:-0.45px">待备案</span></div>
<div class="t" style="left:798.4px;top:239.80px;font-size:8.3px;line-height:12px;color:#4b6fd0;"><span style="font-size:8.75px;letter-spacing:-0.45px">备案</span></div>
<div class="t" style="left:798.4px;top:252.20px;font-size:8.3px;line-height:12px;color:#4b6fd0;"><span style="font-size:8.75px;letter-spacing:-0.45px">查看</span></div>
<div class="t" style="left:158px;top:298.00px;font-size:8.3px;line-height:12px;color:#4b6fd0;">XUEYING–TEST–0</div>
<div class="t" style="left:158px;top:310.40px;font-size:8.3px;line-height:12px;color:#4b6fd0;">001</div>
<div class="t" style="left:250.7px;top:298.00px;font-size:8.3px;line-height:12px;color:#9a9a9a;"><span style="font-size:8.75px;letter-spacing:-0.45px">业务类型</span>:</div>
<div class="t" style="left:292.7px;top:298.00px;font-size:8.3px;line-height:12px;color:#333;"><span style="font-size:8.75px;letter-spacing:-0.45px">网上超市</span></div>
<div class="t" style="left:250.7px;top:310.40px;font-size:8.3px;line-height:12px;color:#9a9a9a;"><span style="font-size:8.75px;letter-spacing:-0.45px">合同名称</span>:</div>
<div class="t" style="left:292.7px;top:310.40px;font-size:8.3px;line-height:12px;color:#333;">JX<span style="font-size:8.75px;letter-spacing:-0.45px">测试电子卖场合同</span>–0322...</div>
<div class="t" style="left:250.7px;top:322.80px;font-size:8.3px;line-height:12px;color:#9a9a9a;"><span style="font-size:8.75px;letter-spacing:-0.45px">合同总额</span>:</div>
<div class="t" style="left:292.7px;top:322.80px;font-size:8.3px;line-height:12px;color:#333;"><span style="color:#dc9042">100.00</span><span style="font-size:8.75px;letter-spacing:-0.45px">元</span></div>
<div class="t" style="left:420.8px;top:298.00px;font-size:8.3px;line-height:12px;color:#9a9a9a;"><span style="font-size:8.75px;letter-spacing:-0.45px">项目名称</span>:</div>
<div class="t" style="left:462.4px;top:298.00px;font-size:8.3px;line-height:12px;color:#333;"><span style="font-size:8.75px;letter-spacing:-0.45px">山西省本级采购单位网上</span>...</div>
<div class="t" style="left:420.8px;top:310.40px;font-size:8.3px;line-height:12px;color:#9a9a9a;"><span style="font-size:8.75px;letter-spacing:-0.45px">项目金额</span>:</div>
<div class="t" style="left:462.4px;top:310.40px;font-size:8.3px;line-height:12px;color:#333;">100.00<span style="font-size:8.75px;letter-spacing:-0.45px">元</span></div>
<div class="t" style="left:420.8px;top:322.80px;font-size:8.3px;line-height:12px;color:#9a9a9a;"><span style="font-size:8.75px;letter-spacing:-0.45px">采购单位</span>:</div>
<div class="t" style="left:462.4px;top:322.80px;font-size:8.3px;line-height:12px;color:#333;"><span style="font-size:8.75px;letter-spacing:-0.45px">山西省本级采购单位</span></div>
<div class="t" style="left:424.3px;top:335.20px;font-size:8.3px;line-height:12px;color:#9a9a9a;"><span style="font-size:8.75px;letter-spacing:-0.45px">供应商</span>:</div>
<div class="t" style="left:457.3px;top:335.20px;font-size:8.3px;line-height:12px;color:#333;"><span style="font-size:8.75px;letter-spacing:-0.45px">测试</span></div>
<div class="t" style="left:584.7px;top:298.00px;font-size:8.3px;line-height:12px;color:#333;">2025–07–23</div>
<div class="t" style="left:584.7px;top:310.40px;font-size:8.3px;line-height:12px;color:#333;">15:33:37</div>
<div class="t" style="left:671.3px;top:298.00px;font-size:8.3px;line-height:12px;color:#333;"><span style="font-size:8.75px;letter-spacing:-0.45px">山西采购人</span></div>
<div class="a" style="left:732.6px;top:302.6px;width:3.4px;height:3.4px;border-radius:50%;background:#4b6fd0"></div>
<div class="t" style="left:738.7px;top:298.00px;font-size:8.3px;line-height:12px;color:#333;"><span style="font-size:8.75px;letter-spacing:-0.45px">待备案</span></div>
<div class="t" style="left:798.4px;top:298.00px;font-size:8.3px;line-height:12px;color:#4b6fd0;"><span style="font-size:8.75px;letter-spacing:-0.45px">备案</span></div>
<div class="t" style="left:798.4px;top:310.40px;font-size:8.3px;line-height:12px;color:#4b6fd0;"><span style="font-size:8.75px;letter-spacing:-0.45px">查看</span></div>
<div class="t" style="left:158px;top:357.40px;font-size:8.3px;line-height:12px;color:#4b6fd0;">SXZFCG–DZMCH</div>
<div class="t" style="left:158px;top:369.80px;font-size:8.3px;line-height:12px;color:#4b6fd0;">T–00JA–2023–000</div>
<div class="t" style="left:158px;top:382.20px;font-size:8.3px;line-height:12px;color:#4b6fd0;">855</div>
<div class="t" style="left:250.7px;top:357.40px;font-size:8.3px;line-height:12px;color:#9a9a9a;"><span style="font-size:8.75px;letter-spacing:-0.45px">业务类型</span>:</div>
<div class="t" style="left:292.7px;top:357.40px;font-size:8.3px;line-height:12px;color:#333;"><span style="font-size:8.75px;letter-spacing:-0.45px">网上超市</span></div>
<div class="t" style="left:250.7px;top:369.80px;font-size:8.3px;line-height:12px;color:#9a9a9a;"><span style="font-size:8.75px;letter-spacing:-0.45px">合同名称</span>:</div>
<div class="t" style="left:292.7px;top:369.80px;font-size:8.3px;line-height:12px;color:#333;"><span style="font-size:8.75px;letter-spacing:-0.45px">山西省财政厅复印纸直接选</span>...</div>
<div class="t" style="left:250.7px;top:382.20px;font-size:8.3px;line-height:12px;color:#9a9a9a;"><span style="font-size:8.75px;letter-spacing:-0.45px">合同总额</span>:</div>
<div class="t" style="left:292.7px;top:382.20px;font-size:8.3px;line-height:12px;color:#333;"><span style="color:#dc9042">100.00</span><span style="font-size:8.75px;letter-spacing:-0.45px">元</span></div>
<div class="t" style="left:420.8px;top:357.40px;font-size:8.3px;line-height:12px;color:#9a9a9a;"><span style="font-size:8.75px;letter-spacing:-0.45px">项目名称</span>:</div>
<div class="t" style="left:462.4px;top:357.40px;font-size:8.3px;line-height:12px;color:#333;"><span style="font-size:8.75px;letter-spacing:-0.45px">山西省本级采购单位网上</span>...</div>
<div class="t" style="left:420.8px;top:369.80px;font-size:8.3px;line-height:12px;color:#9a9a9a;"><span style="font-size:8.75px;letter-spacing:-0.45px">项目金额</span>:</div>
<div class="t" style="left:462.4px;top:369.80px;font-size:8.3px;line-height:12px;color:#333;">100.00<span style="font-size:8.75px;letter-spacing:-0.45px">元</span></div>
<div class="t" style="left:420.8px;top:382.20px;font-size:8.3px;line-height:12px;color:#9a9a9a;"><span style="font-size:8.75px;letter-spacing:-0.45px">采购单位</span>:</div>
<div class="t" style="left:462.4px;top:382.20px;font-size:8.3px;line-height:12px;color:#333;"><span style="font-size:8.75px;letter-spacing:-0.45px">山西省本级采购单位</span></div>
<div class="t" style="left:424.3px;top:394.60px;font-size:8.3px;line-height:12px;color:#9a9a9a;"><span style="font-size:8.75px;letter-spacing:-0.45px">供应商</span>:</div>
<div class="t" style="left:457.3px;top:394.60px;font-size:8.3px;line-height:12px;color:#333;"><span style="font-size:8.75px;letter-spacing:-0.45px">博思数村科技发展有限公司</span></div>
<div class="t" style="left:584.7px;top:357.40px;font-size:8.3px;line-height:12px;color:#333;">2025–07–23</div>
<div class="t" style="left:584.7px;top:369.80px;font-size:8.3px;line-height:12px;color:#333;">10:41:18</div>
<div class="t" style="left:671.3px;top:357.40px;font-size:8.3px;line-height:12px;color:#333;"><span style="font-size:8.75px;letter-spacing:-0.45px">山西采购人</span></div>
<div class="a" style="left:732.6px;top:362.0px;width:3.4px;height:3.4px;border-radius:50%;background:#4b6fd0"></div>
<div class="t" style="left:738.7px;top:357.40px;font-size:8.3px;line-height:12px;color:#333;"><span style="font-size:8.75px;letter-spacing:-0.45px">备案中</span></div>
<div class="t" style="left:798.4px;top:357.40px;font-size:8.3px;line-height:12px;color:#4b6fd0;"><span style="font-size:8.75px;letter-spacing:-0.45px">查看</span></div>
<div class="t" style="left:158px;top:416.40px;font-size:8.3px;line-height:12px;color:#4b6fd0;">11NWF15QKKXG2</div>
<div class="t" style="left:158px;top:428.80px;font-size:8.3px;line-height:12px;color:#4b6fd0;">0254601</div>
<div class="t" style="left:250.7px;top:416.40px;font-size:8.3px;line-height:12px;color:#9a9a9a;"><span style="font-size:8.75px;letter-spacing:-0.45px">业务类型</span>:</div>
<div class="t" style="left:292.7px;top:416.40px;font-size:8.3px;line-height:12px;color:#333;"><span style="font-size:8.75px;letter-spacing:-0.45px">合同直录</span></div>
<div class="t" style="left:250.7px;top:428.80px;font-size:8.3px;line-height:12px;color:#9a9a9a;"><span style="font-size:8.75px;letter-spacing:-0.45px">合同名称</span>:</div>
<div class="t" style="left:292.7px;top:428.80px;font-size:8.3px;line-height:12px;color:#333;"><span style="font-size:8.75px;letter-spacing:-0.45px">雪莹合同直录</span>aaaaaa</div>
<div class="t" style="left:250.7px;top:441.20px;font-size:8.3px;line-height:12px;color:#9a9a9a;"><span style="font-size:8.75px;letter-spacing:-0.45px">合同总额</span>:</div>
<div class="t" style="left:292.7px;top:441.20px;font-size:8.3px;line-height:12px;color:#333;"><span style="color:#dc9042">1.00</span><span style="font-size:8.75px;letter-spacing:-0.45px">元</span></div>
<div class="t" style="left:420.8px;top:416.40px;font-size:8.3px;line-height:12px;color:#9a9a9a;"><span style="font-size:8.75px;letter-spacing:-0.45px">项目名称</span>:</div>
<div class="t" style="left:462.4px;top:416.40px;font-size:8.3px;line-height:12px;color:#333;"><span style="font-size:8.75px;letter-spacing:-0.45px">雪莹走一条合同直录流程</span></div>
<div class="t" style="left:420.8px;top:428.80px;font-size:8.3px;line-height:12px;color:#9a9a9a;"><span style="font-size:8.75px;letter-spacing:-0.45px">项目金额</span>:</div>
<div class="t" style="left:462.4px;top:428.80px;font-size:8.3px;line-height:12px;color:#333;">1.00<span style="font-size:8.75px;letter-spacing:-0.45px">元</span></div>
<div class="t" style="left:420.8px;top:441.20px;font-size:8.3px;line-height:12px;color:#9a9a9a;"><span style="font-size:8.75px;letter-spacing:-0.45px">采购单位</span>:</div>
<div class="t" style="left:462.4px;top:441.20px;font-size:8.3px;line-height:12px;color:#333;"><span style="font-size:8.75px;letter-spacing:-0.45px">山西省本级采购单位</span></div>
<div class="t" style="left:424.3px;top:453.60px;font-size:8.3px;line-height:12px;color:#9a9a9a;"><span style="font-size:8.75px;letter-spacing:-0.45px">供应商</span>:</div>
<div class="t" style="left:457.3px;top:453.60px;font-size:8.3px;line-height:12px;color:#333;"><span style="font-size:8.75px;letter-spacing:-0.45px">合众盛</span>(<span style="font-size:8.75px;letter-spacing:-0.45px">大连</span>)<span style="font-size:8.75px;letter-spacing:-0.45px">国际贸易有限</span>...</div>
<div class="t" style="left:584.7px;top:416.40px;font-size:8.3px;line-height:12px;color:#333;">2025–07–22</div>
<div class="t" style="left:584.7px;top:428.80px;font-size:8.3px;line-height:12px;color:#333;">10:04:36</div>
<div class="t" style="left:671.3px;top:416.40px;font-size:8.3px;line-height:12px;color:#333;"><span style="font-size:8.75px;letter-spacing:-0.45px">山西采购人</span></div>
<div class="a" style="left:732.6px;top:421.0px;width:3.4px;height:3.4px;border-radius:50%;background:#67c23a"></div>
<div class="t" style="left:738.7px;top:416.40px;font-size:8.3px;line-height:12px;color:#333;"><span style="font-size:8.75px;letter-spacing:-0.45px">已完成</span></div>
<div class="t" style="left:798.4px;top:416.40px;font-size:8.3px;line-height:12px;color:#4b6fd0;"><span style="font-size:8.75px;letter-spacing:-0.45px">查看</span></div>
<div class="t" style="left:158px;top:475.40px;font-size:8.3px;line-height:12px;color:#4b6fd0;">[<span style="font-size:8.75px;letter-spacing:-0.45px">项目采购</span>]WF15QK</div>
<div class="t" style="left:158px;top:487.80px;font-size:8.3px;line-height:12px;color:#4b6fd0;">KXG20251801</div>
<div class="t" style="left:250.7px;top:475.40px;font-size:8.3px;line-height:12px;color:#9a9a9a;"><span style="font-size:8.75px;letter-spacing:-0.45px">业务类型</span>:</div>
<div class="t" style="left:292.7px;top:475.40px;font-size:8.3px;line-height:12px;color:#333;"><span style="font-size:8.75px;letter-spacing:-0.45px">新项目采购</span></div>
<div class="t" style="left:250.7px;top:487.80px;font-size:8.3px;line-height:12px;color:#9a9a9a;"><span style="font-size:8.75px;letter-spacing:-0.45px">合同名称</span>:</div>
<div class="t" style="left:292.7px;top:487.80px;font-size:8.3px;line-height:12px;color:#333;">2025–07–11<span style="font-size:8.75px;letter-spacing:-0.45px">培训合同</span></div>
<div class="t" style="left:250.7px;top:500.20px;font-size:8.3px;line-height:12px;color:#9a9a9a;"><span style="font-size:8.75px;letter-spacing:-0.45px">合同总额</span>:</div>
<div class="t" style="left:292.7px;top:500.20px;font-size:8.3px;line-height:12px;color:#333;"><span style="color:#dc9042">1.00</span><span style="font-size:8.75px;letter-spacing:-0.45px">元</span></div>
<div class="t" style="left:420.8px;top:475.40px;font-size:8.3px;line-height:12px;color:#9a9a9a;"><span style="font-size:8.75px;letter-spacing:-0.45px">项目名称</span>:</div>
<div class="t" style="left:462.4px;top:475.40px;font-size:8.3px;line-height:12px;color:#333;">2025–07–11<span style="font-size:8.75px;letter-spacing:-0.45px">培训</span></div>
<div class="t" style="left:420.8px;top:487.80px;font-size:8.3px;line-height:12px;color:#9a9a9a;"><span style="font-size:8.75px;letter-spacing:-0.45px">项目金额</span>:</div>
<div class="t" style="left:462.4px;top:487.80px;font-size:8.3px;line-height:12px;color:#333;">1.00<span style="font-size:8.75px;letter-spacing:-0.45px">元</span></div>
<div class="t" style="left:420.8px;top:500.20px;font-size:8.3px;line-height:12px;color:#9a9a9a;"><span style="font-size:8.75px;letter-spacing:-0.45px">采购单位</span>:</div>
<div class="t" style="left:462.4px;top:500.20px;font-size:8.3px;line-height:12px;color:#333;"><span style="font-size:8.75px;letter-spacing:-0.45px">山西省本级采购单位</span></div>
<div class="t" style="left:424.3px;top:512.60px;font-size:8.3px;line-height:12px;color:#9a9a9a;"><span style="font-size:8.75px;letter-spacing:-0.45px">供应商</span>:</div>
<div class="t" style="left:457.3px;top:512.60px;font-size:8.3px;line-height:12px;color:#333;"><span style="font-size:8.75px;letter-spacing:-0.45px">绍兴市汽车运输集团</span></div>
<div class="t" style="left:584.7px;top:475.40px;font-size:8.3px;line-height:12px;color:#333;">2025–07–15</div>
<div class="t" style="left:584.7px;top:487.80px;font-size:8.3px;line-height:12px;color:#333;">15:02:30</div>
<div class="t" style="left:671.3px;top:475.40px;font-size:8.3px;line-height:12px;color:#333;"><span style="font-size:8.75px;letter-spacing:-0.45px">山西政府集</span></div>
<div class="t" style="left:671.3px;top:487.80px;font-size:8.3px;line-height:12px;color:#333;"><span style="font-size:8.75px;letter-spacing:-0.45px">采</span></div>
<div class="a" style="left:732.6px;top:480.0px;width:3.4px;height:3.4px;border-radius:50%;background:#67c23a"></div>
<div class="t" style="left:738.7px;top:475.40px;font-size:8.3px;line-height:12px;color:#333;"><span style="font-size:8.75px;letter-spacing:-0.45px">已完成</span></div>
<div class="t" style="left:798.4px;top:475.40px;font-size:8.3px;line-height:12px;color:#4b6fd0;"><span style="font-size:8.75px;letter-spacing:-0.45px">查看</span></div>
<div class="t" style="left:158px;top:535.80px;font-size:8.3px;line-height:12px;color:#4b6fd0;">0KZFOO–DZMOU</div>
<div class="t" style="left:250.7px;top:535.80px;font-size:8.3px;line-height:12px;color:#9a9a9a;"><span style="font-size:8.75px;letter-spacing:-0.45px">业务类型</span>:</div>
<div class="t" style="left:292.7px;top:535.80px;font-size:8.3px;line-height:12px;color:#333;"><span style="font-size:8.75px;letter-spacing:-0.45px">网上超市</span></div>
<div class="t" style="left:420.8px;top:535.80px;font-size:8.3px;line-height:12px;color:#9a9a9a;"><span style="font-size:8.75px;letter-spacing:-0.45px">项目名称</span>:</div>
<div class="t" style="left:462.4px;top:535.80px;font-size:8.3px;line-height:12px;color:#333;"><span style="font-size:8.75px;letter-spacing:-0.45px">山西省本级采购单位网上</span></div>
<div class="t" style="left:584.7px;top:535.80px;font-size:8.3px;line-height:12px;color:#333;">2025–07–11</div>
<div class="t" style="left:671.3px;top:535.80px;font-size:8.3px;line-height:12px;color:#333;"><span style="font-size:8.75px;letter-spacing:-0.45px">山西采购人</span></div>
<div class="a" style="left:732.6px;top:540.4px;width:3.4px;height:3.4px;border-radius:50%;background:#4b6fd0"></div>
<div class="t" style="left:738.7px;top:535.80px;font-size:8.3px;line-height:12px;color:#333;"><span style="font-size:8.75px;letter-spacing:-0.45px">备案中</span></div>
<div class="t" style="left:798.4px;top:535.80px;font-size:8.3px;line-height:12px;color:#4b6fd0;"><span style="font-size:8.75px;letter-spacing:-0.45px">查看</span></div>
<div class="a" style="left:718px;top:210px;width:116.5px;height:64px;border:2px solid #f21d1d"></div>
<div class="a" style="left:276.6px;top:524.6px;width:301.2px;height:7.3px;border-radius:3.65px;background:#0d0d0d"></div>
<div class="a" style="left:820.5px;top:317.2px;width:27.6px;height:114.3px;border-radius:3px;background:#537cef;box-shadow:0 1px 3px rgba(0,0,0,.15)"></div>
<svg class="a" style="left:827.2px;top:324.6px" width="14.5" height="14.5" viewBox="0 0 14 14"><path d="M2.3 8V6.3A4.7 4.7 0 0 1 11.7 6.3V8" stroke="#fff" stroke-width="1.3" fill="none"/><rect x="1.2" y="7" width="2.6" height="4.2" rx="1.2" stroke="#fff" stroke-width="1.2" fill="none"/><rect x="10.2" y="7" width="2.6" height="4.2" rx="1.2" stroke="#fff" stroke-width="1.2" fill="none"/><path d="M11.5 11.2Q11 13 8 13" stroke="#fff" stroke-width="1.2" fill="none"/><circle cx="7.5" cy="13" r=".9" fill="#fff"/></svg>
<svg class="a" style="left:827.2px;top:352.4px" width="14.5" height="14.5" viewBox="0 0 14 14"><rect x="1.2" y="1.2" width="11.6" height="11.6" stroke="#fff" stroke-width="1.3" fill="none"/><rect x="3.2" y="3.2" width="7.6" height="5.6" stroke="#fff" stroke-width="1" fill="none"/><path d="M5.3 4.8V7.3M7 4.8V7.3M8.7 4.8V7.3M1.2 10.8H12.8" stroke="#fff" stroke-width="1.1"/></svg>
<svg class="a" style="left:827.2px;top:381.4px" width="14.5" height="14.5" viewBox="0 0 14 14"><rect x="1" y="1" width="5" height="5" rx=".6" stroke="#fff" stroke-width="1.2" fill="none"/><rect x="8" y="1" width="5" height="5" rx=".6" stroke="#fff" stroke-width="1.2" fill="none"/><rect x="1" y="8" width="5" height="5" rx=".6" stroke="#fff" stroke-width="1.2" fill="none"/><rect x="2.8" y="2.8" width="1.4" height="1.4" fill="#fff"/><rect x="9.8" y="2.8" width="1.4" height="1.4" fill="#fff"/><rect x="2.8" y="9.8" width="1.4" height="1.4" fill="#fff"/><path d="M8 8.2H10.2V10.6H8V13M10.8 13V10.8H13M12.2 8V9.5" stroke="#fff" stroke-width="1.1" fill="none"/></svg>
<svg class="a" style="left:827.2px;top:410.4px" width="14.5" height="14.5" viewBox="0 0 14 14"><path d="M4.2 3.6V1.3H12.8V8.6H10.6" stroke="#fff" stroke-width="1.2" fill="none" stroke-linejoin="round"/><path d="M1.2 3.8H10.2V11H5L2.3 13V11H1.2Z" stroke="#fff" stroke-width="1.2" fill="none" stroke-linejoin="round"/><circle cx="3.7" cy="7.4" r=".75" fill="#fff"/><circle cx="5.7" cy="7.4" r=".75" fill="#fff"/><circle cx="7.7" cy="7.4" r=".75" fill="#fff"/></svg>
<svg class="a" style="left:822px;top:293px" width="25" height="25" viewBox="0 0 25 25"><path d="M9 6.5 7.6 3.2M16 6.5 17.4 3.2" stroke="#3a2a20" stroke-width="0.9"/><circle cx="7.4" cy="2.9" r="1" fill="#3a2a20"/><circle cx="17.6" cy="2.9" r="1" fill="#3a2a20"/><path d="M6 25Q6 20.5 12.5 20.5Q19 20.5 19 25Z" fill="#d9733a"/><ellipse cx="12.4" cy="13.4" rx="10.8" ry="8.6" fill="#e07a3c"/><ellipse cx="12.4" cy="14.6" rx="7.2" ry="5.6" fill="#fce6d2"/><circle cx="9.6" cy="13.9" r=".85" fill="#333"/><circle cx="15.2" cy="13.9" r=".85" fill="#333"/><path d="M11 16.3Q12.4 17.3 13.8 16.3" stroke="#333" stroke-width=".6" fill="none"/></svg>
<div class="a" style="left:841.6px;top:279.4px;width:7.6px;height:7.6px;border-radius:50%;background:#c2c4c8"></div>
<svg class="a" style="left:843.4px;top:281.2px" width="4" height="4" viewBox="0 0 10 10"><path d="M1.5 1.5 8.5 8.5M8.5 1.5 1.5 8.5" stroke="#fff" stroke-width="2"/></svg>
<svg class="a" style="left:815px;top:496.2px" width="28" height="28" viewBox="0 0 28 28"><defs><linearGradient id="rg" x1="0" y1="0" x2="1" y2="1"><stop offset="0" stop-color="#7a55de"/><stop offset="1" stop-color="#4d63d8"/></linearGradient><linearGradient id="vg" x1="0" y1="0" x2="0" y2="1"><stop offset="0" stop-color="#2a62d8"/><stop offset="1" stop-color="#5aa0f0"/></linearGradient></defs><circle cx="14" cy="14" r="13.7" fill="url(#rg)"/><ellipse cx="14" cy="13.2" rx="9.6" ry="8.4" fill="#eef2fb"/><path d="M14 26.5Q8.5 26.5 8.5 22Q8.5 19.5 14 19.5Q19.5 19.5 19.5 22Q19.5 26.5 14 26.5Z" fill="#e6ebf7"/><path d="M7 13.5Q7 9.2 10.5 9.5Q14 8.2 17.5 9.5Q21 9.2 21 13.5Q21 18 14 18Q7 18 7 13.5Z" fill="url(#vg)"/><rect x="10.8" y="12.2" width="1.6" height="2.6" rx=".7" fill="#fff"/><rect x="15.6" y="12.2" width="1.6" height="2.6" rx=".7" fill="#fff"/><circle cx="9.5" cy="5.5" r=".6" fill="#fff"/><circle cx="18.5" cy="5.5" r=".6" fill="#fff"/></svg>
</body></html>
